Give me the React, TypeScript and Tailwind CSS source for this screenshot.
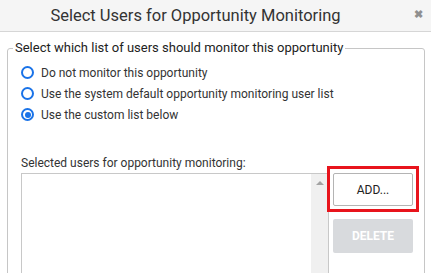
import { useState } from "react";

const options = [
  { id: "none", label: "Do not monitor this opportunity" },
  { id: "default", label: "Use the system default opportunity monitoring user list" },
  { id: "custom", label: "Use the custom list below" },
];

export default function App() {
  const [choice, setChoice] = useState("custom");

  return (
    <div className="w-[431px] h-[273px] overflow-hidden bg-white font-['Roboto',sans-serif] text-[#333]">
      {/* Header */}
      <div className="relative h-[32px] bg-[#f5f5f5] border-b border-[#d6d6d6] flex items-center">
        <div className="w-[391px] text-center text-[16.5px] leading-[22px] text-[#333]">
          Select Users for Opportunity Monitoring
        </div>
        <button className="absolute right-[8px] top-[9px] text-[#8f8f8f] text-[11px] font-bold leading-none">
          ✖
        </button>
      </div>

      {/* Monitoring list */}
      <fieldset className="mt-[9px] ml-[7px] w-[418px] h-[260px] border border-[#c6c6c6] rounded-[3px]">
        <legend className="ml-[5px] px-[2px] text-[13px] leading-[14px] text-[#222]">
          Select which list of users should monitor this opportunity
        </legend>
        <div className="pl-[13px] pt-[7px]">
          {options.map((o) => (
            <label key={o.id} className="flex items-center h-[21px] gap-[7px] cursor-pointer">
              <span
                onClick={() => setChoice(o.id)}
                className="w-[13px] h-[13px] rounded-full border-2 border-[#1a73e8] flex items-center justify-center"
              >
                {choice === o.id && <span className="w-[6px] h-[6px] rounded-full bg-[#1a73e8]" />}
              </span>
              <span className="text-[12px] leading-[16px]">{o.label}</span>
            </label>
          ))}

          <div className="mt-[30px] mb-[2px] text-[12px] leading-[16px]">
            Selected users for opportunity monitoring:
          </div>

          <div className="flex items-start gap-[4px]">
            <div className="w-[308px] h-[150px] border border-[#c8c8c8] flex justify-end">
              <div className="w-[17px] h-full bg-[#f0f0f0] flex justify-center pt-[7px]">
                <span className="w-0 h-0 border-l-[4px] border-r-[4px] border-b-[4px] border-l-transparent border-r-transparent border-b-[#a3a3a3]" />
              </div>
            </div>
            <div className="flex flex-col gap-[13px]">
              <div className="relative">
                <button className="w-[80px] h-[33px] bg-white border border-[#b4b4b4] rounded-[2px] text-[12px] text-[#222]">
                  ADD...
                </button>
                <div className="absolute -left-[6px] -top-[7px] -right-[6px] -bottom-[6px] border-[3px] border-[#e8141c] pointer-events-none" />
              </div>
              <button className="w-[80px] h-[34px] bg-[#d8dadd] rounded-[2px] text-[12px] font-bold text-white">
                DELETE
              </button>
            </div>
          </div>
        </div>
      </fieldset>
    </div>
  );
}
